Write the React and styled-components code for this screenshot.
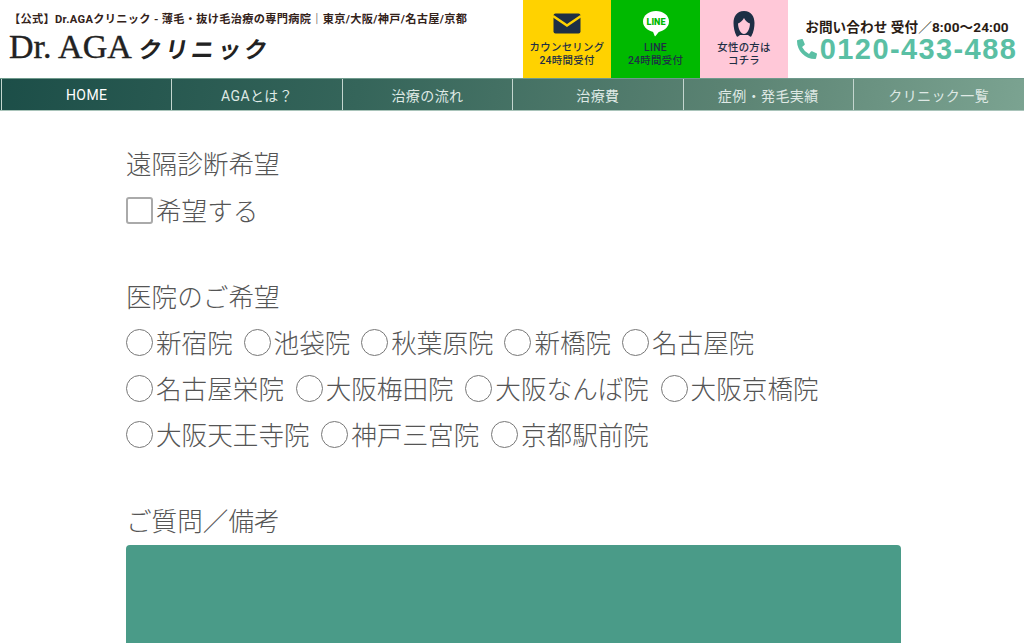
import React from "react";
import styled, { createGlobalStyle } from "styled-components";
import { FaPhoneAlt } from "react-icons/fa";

const Global = createGlobalStyle`
  html, body { margin: 0; padding: 0; background: #fff; overflow: hidden; }
  body { font-family: Roboto, "Noto Sans CJK JP", sans-serif; height: 643px; }
`;
const Header = styled.header`display: flex; height: 78px;`;
const Brand = styled.div`width: 523px; padding: 12px 0 0 9px; box-sizing: border-box;`;
const Tagline = styled.h1`
  margin: 0; font-size: 11.2px; line-height: 15px; font-weight: 700; color: #33221a; white-space: nowrap;
  letter-spacing: .32px; font-family: Roboto, "Noto Sans CJK JP", sans-serif;
`;
const Logo = styled.div`
  display: flex; align-items: baseline; margin-top: 2px; height: 34px; color: #222; white-space: nowrap;
`;
const LogoLatin = styled.span`
  font: 400 34px/36px "Liberation Serif", serif; -webkit-text-stroke: .4px #222;
`;
const LogoKana = styled.span`
  display: inline-block; margin-left: 7px; font: 700 23px/36px "Noto Sans CJK JP", sans-serif;
  letter-spacing: 3.4px; transform: skewX(-10deg);
`;
const Cta = styled.a`
  width: ${p => p.$w}px; background: ${p => p.$bg}; display: flex; flex-direction: column; align-items: center;
  padding-top: 11px; box-sizing: border-box; color: #1e2f45; text-decoration: none;
`;
const CtaIcon = styled.svg`width: 30px; height: 26px; display: block;`;
const CtaText = styled.span`
  margin-top: 4px; font-size: 10.4px; line-height: 13px; font-weight: 500; text-align: center; letter-spacing: .3px; white-space: nowrap;
`;
const Contact = styled.div`flex: 1; padding: 19px 0 0 2px; display: flex; flex-direction: column; align-items: center;`;
const Hours = styled.div`font-size: 13.6px; line-height: 17px; font-weight: 700; letter-spacing: .1px; color: #2a1c15; white-space: nowrap;`;
const Phone = styled.div`
  display: flex; align-items: center; gap: 3px; color: #5abfa4; font: 700 29px/28px "Liberation Sans", Arial, sans-serif;
  white-space: nowrap; margin-top: -1px; letter-spacing: 1.4px;
  svg { font-size: 20px; }
`;
const Nav = styled.nav`
  display: flex; height: 33px; box-sizing: border-box; padding-left: 1px; border-top: 1px solid #6f9a8c; border-bottom: 1px solid #a9c4ba;
  background: linear-gradient(100deg, #1c4e48 0%, #35655a 35%, #5a8272 70%, #7ba391 100%);
`;
const NavItem = styled.a`
  flex: 0 0 170.4px; display: flex; align-items: center; justify-content: center; border-left: 1px solid #c4d6cf;
  box-sizing: border-box;
  color: ${p => (p.$active ? "#fff" : "#dfe9e5")}; font-size: 14px; letter-spacing: .4px; text-decoration: none; white-space: nowrap;
`;
const Form = styled.div`width: 775px; margin: 0 0 0 126px; padding-top: 31px;`;
const Group = styled.div`margin-bottom: ${p => p.$mb}px;`;
const Label = styled.div`font-size: 25.6px; line-height: 46px; font-weight: 300; color: #555;`;
const Options = styled.div`margin-top: ${p => p.$mt}px;`;
const OptionRow = styled.div`display: flex; column-gap: ${p => p.$gap}px;`;
const Option = styled.label`
  display: inline-flex; align-items: center; height: 46px; font-size: 25.6px; font-weight: 300; color: #555; white-space: nowrap;
`;
const OptionText = styled.span`margin-bottom: 2px;`;
const Box = styled.span`
  width: 27px; height: 27px; box-sizing: border-box; margin-right: 3px; background: #fff; border: 2px solid #aaa;
  border-radius: ${p => (p.$round ? "50%" : "3px")}; flex: none;
  ${p => p.$round && "border: 1.5px solid #777;"}
`;
const Area = styled.div`height: 120px; background: #4a9b88; border-radius: 4px 4px 0 0;`;

const Mail = () => (
  <CtaIcon viewBox="0 0 30 26"><rect x="1.500" y="2.500" width="27" height="20" rx="2" fill="#1e2f45"/><path d="M1 5 15 14.500 29 5" fill="none" stroke="#ffd200" strokeWidth="2.6"/></CtaIcon>
);
const Line = () => (
  <CtaIcon viewBox="0 0 30 26"><ellipse cx="15" cy="10.500" rx="13" ry="10.500" fill="#fff"/><path d="M11.500 19.500h7.500l-4.500 5.500c-.5.500-1 .2-1-.5z" fill="#fff"/><text x="15" y="14" textAnchor="middle" fontSize="9" fontWeight="900" fill="#00b900" fontFamily="Roboto">LINE</text></CtaIcon>
);
const Woman = () => (
  <CtaIcon viewBox="0 0 30 26"><path d="M15 0C7.500 0 4.500 6 4.500 12c0 4.500 1 9 3 13 .3.7 1 .9 1.500.5l2-1.500h8l2 1.500c.5.400 1.200.2 1.500-.5 2-4 3-8.500 3-13C25.500 6 22.500 0 15 0z" fill="#1e2f45"/><path d="M15 7c-1.500 3-4 4.500-6 5.500.2 6 3 10.500 6 10.500s5.800-4.500 6-10.500C18.500 11.500 16.500 10 15 7z" fill="#ffc8d8"/></CtaIcon>
);
const rows = [
  { gap: 10.800, items: ["新宿院", "池袋院", "秋葉原院", "新橋院", "名古屋院"] },
  { gap: 11.700, items: ["名古屋栄院", "大阪梅田院", "大阪なんば院", "大阪京橋院"] },
  { gap: 11.700, items: ["大阪天王寺院", "神戸三宮院", "京都駅前院"] },
];
const nav = ["HOME", "AGAとは？", "治療の流れ", "治療費", "症例・発毛実績", "クリニック一覧"];

export default function App() {
  return (
    <>
      <Global />
      <Header>
        <Brand>
          <Tagline>【公式】Dr.AGAクリニック - 薄毛・抜け毛治療の専門病院｜東京/大阪/神戸/名古屋/京都</Tagline>
          <Logo><LogoLatin>Dr. AGA</LogoLatin><LogoKana>クリニック</LogoKana></Logo>
        </Brand>
        <Cta $w={88} $bg="#ffd200"><Mail /><CtaText>カウンセリング<br />24時間受付</CtaText></Cta>
        <Cta $w={89} $bg="#00b900"><Line /><CtaText>LINE<br />24時間受付</CtaText></Cta>
        <Cta $w={88} $bg="#ffc8d8"><Woman /><CtaText>女性の方は<br />コチラ</CtaText></Cta>
        <Contact>
          <Hours>お問い合わせ 受付／8:00〜24:00</Hours>
          <Phone><FaPhoneAlt />0120-433-488</Phone>
        </Contact>
      </Header>
      <Nav>{nav.map((n, i) => <NavItem key={n} $active={i === 0}>{n}</NavItem>)}</Nav>
      <Form>
        <Group $mb={42}>
          <Label>遠隔診断希望</Label>
          <Options $mt={-1}><OptionRow $gap={11}><Option><Box /><OptionText>希望する</OptionText></Option></OptionRow></Options>
        </Group>
        <Group $mb={42}>
          <Label>医院のご希望</Label>
          <Options $mt={-2}>
            {rows.map((r, i) => (
              <OptionRow key={i} $gap={r.gap}>
                {r.items.map(o => <Option key={o}><Box $round /><OptionText>{o}</OptionText></Option>)}
              </OptionRow>
            ))}
          </Options>
        </Group>
        <Label>ご質問／備考</Label>
        <Area />
      </Form>
    </>
  );
}
